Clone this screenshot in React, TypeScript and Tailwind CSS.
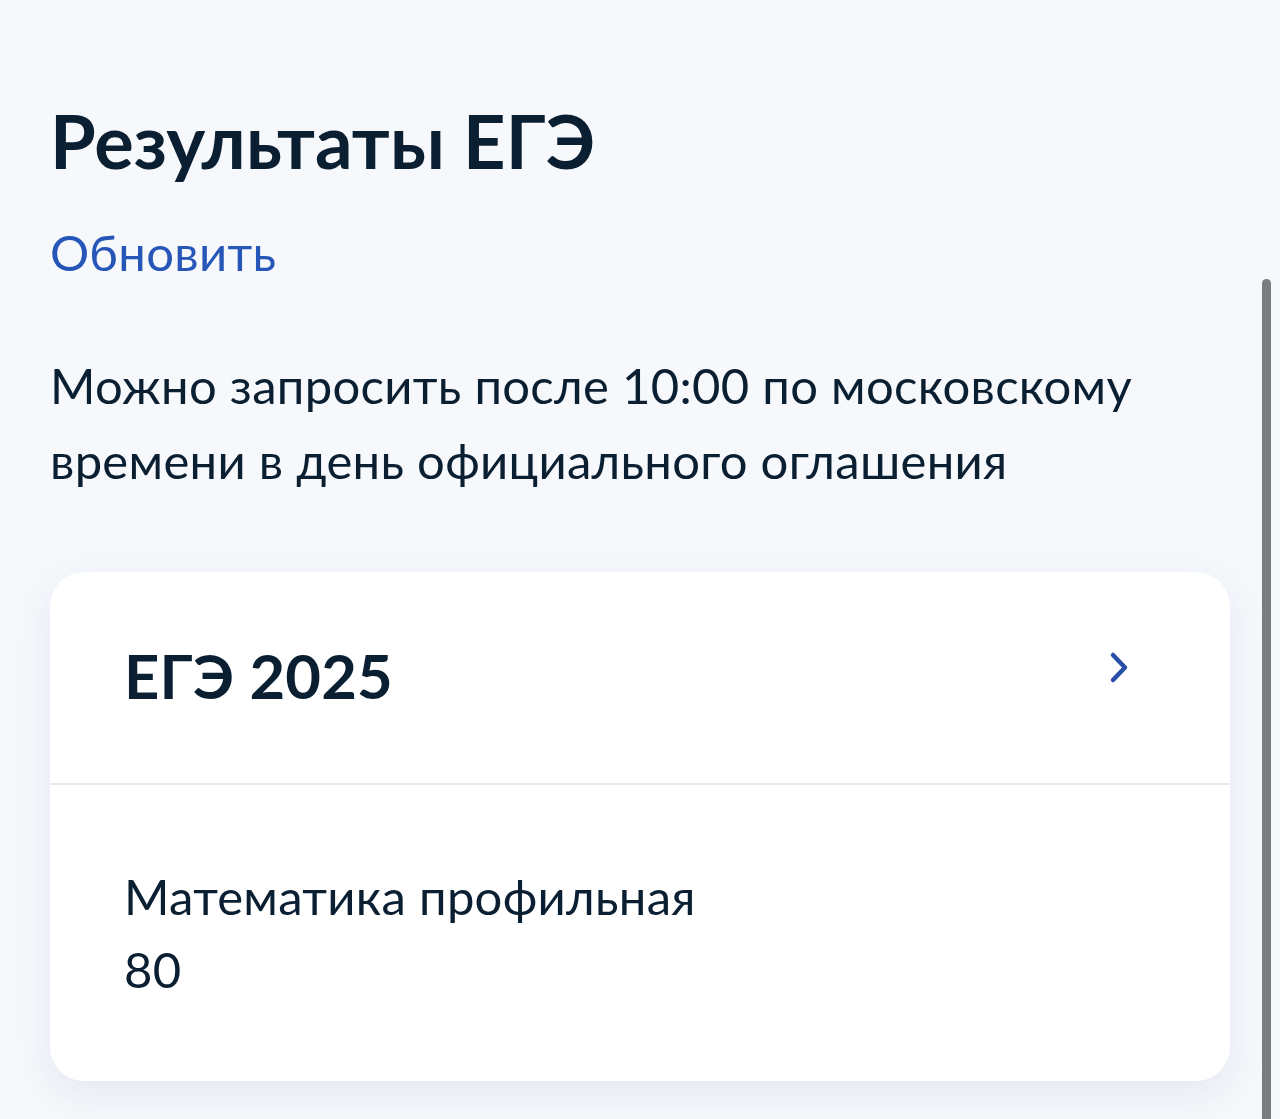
import React from "react";

const font = { fontFamily: "Lato, 'Noto Sans', sans-serif" };

function Chevron() {
  return (
    <svg width="24" height="36" viewBox="0 0 24 36" fill="none" aria-hidden="true">
      <polyline
        points="6,4 18,16.5 6,29"
        stroke="#2a4fa8"
        strokeWidth="4.5"
        strokeLinecap="round"
        strokeLinejoin="round"
      />
    </svg>
  );
}

export default function App() {
  return (
    <div className="relative min-h-screen overflow-hidden bg-[#f6f8fb]" style={font}>
      <div className="px-[50px] pt-[97px] pb-[40px]">
        <h1 className="text-[74px] leading-[88px] font-bold text-[#0b1f33] tracking-[0.1px]">
          Результаты ЕГЭ
        </h1>
        <a className="mt-[31px] block text-[49px] leading-[72px] text-[#2556b8] tracking-[0.3px]">Обновить</a>
        <p className="mt-[60px] text-[49px] leading-[75px] text-[#0b1f33] tracking-[0.3px]">
          Можно запросить после 10:00 по московскому
          <br />
          времени в день официального оглашения
        </p>

        <div className="mt-[74px] rounded-[34px] bg-white shadow-[0_12px_40px_rgba(40,70,150,0.09)]">
          <div className="flex items-center justify-between pl-[74px] pr-[99px] pt-[67px] pb-[72px]">
            <span className="text-[61.5px] leading-[72px] font-bold text-[#0b1f33] tracking-[0.2px]">ЕГЭ 2025</span>
            <div className="-mt-[12px]">
              <Chevron />
            </div>
          </div>
          <div className="h-[2px] bg-[#e6eaf0]" />
          <div className="pl-[74px] pt-[75px] pb-[75px] text-[49px] leading-[73px] text-[#0b1f33] tracking-[0.3px]">
            <div>Математика профильная</div>
            <div>80</div>
          </div>
        </div>
      </div>

      {/* overlay scroll indicator */}
      <div className="absolute left-[1262px] top-[279px] h-[900px] w-[9px] rounded-full bg-[#7b7c80]" />
    </div>
  );
}
